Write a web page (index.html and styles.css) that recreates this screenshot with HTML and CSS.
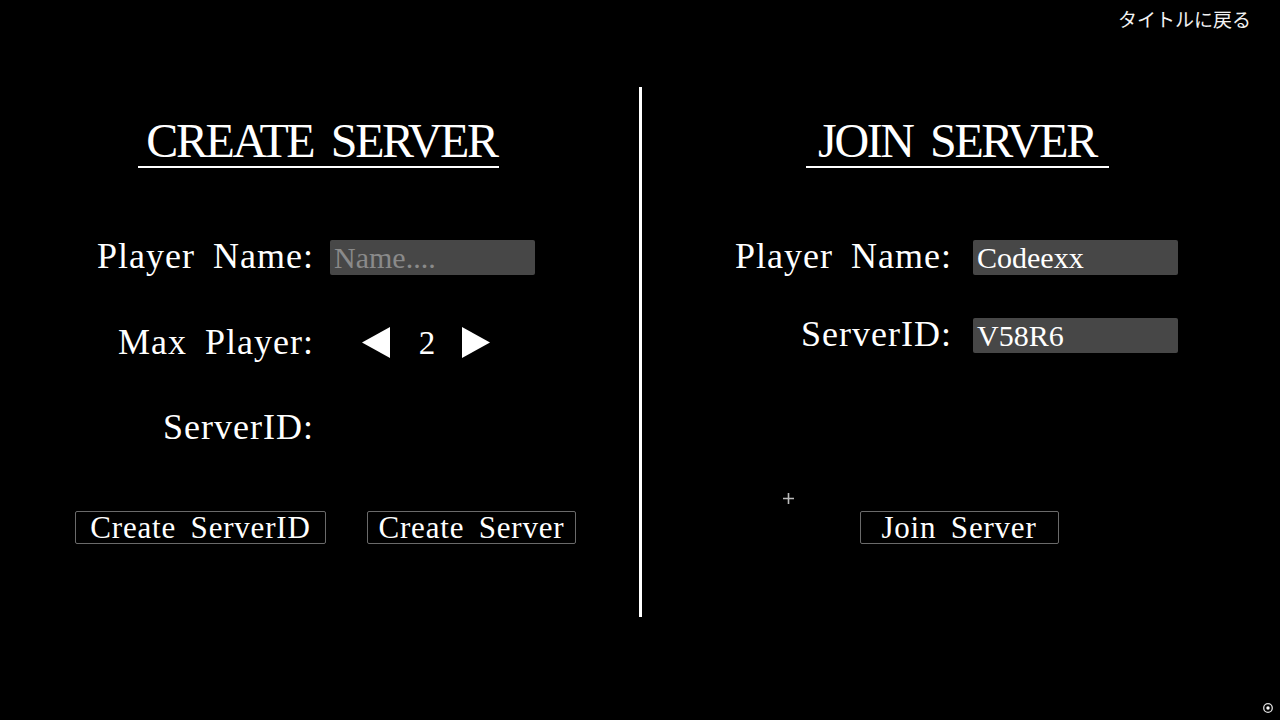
FILE: index.html
```html
<!DOCTYPE html>
<html lang="ja">
<head>
<meta charset="utf-8">
<title>Server Menu</title>
<link rel="stylesheet" href="styles.css">
</head>
<body>
<div class="screen">
  <a class="back-link">タイトルに戻る</a>

  <main class="menu">
    <section class="panel panel-create">
      <h1 class="panel-title">CREATE SERVER</h1>
      <div class="form form-create">
        <div class="row">
          <span class="label">Player Name:</span>
          <span class="field placeholder">Name....</span>
        </div>
        <div class="row">
          <span class="label">Max Player:</span>
          <div class="stepper">
            <svg class="arrow" viewBox="0 0 28 31" width="28" height="31"><polygon points="28,0 28,31 0,15.5" fill="#fff"/></svg>
            <span class="count">2</span>
            <svg class="arrow" viewBox="0 0 28 31" width="28" height="31"><polygon points="0,0 0,31 28,15.5" fill="#fff"/></svg>
          </div>
        </div>
        <div class="row">
          <span class="label">ServerID:</span>
          <span class="value"></span>
        </div>
      </div>
      <div class="buttons buttons-create">
        <button class="btn btn-wide">Create ServerID</button>
        <button class="btn btn-mid">Create Server</button>
      </div>
    </section>

    <div class="divider"></div>

    <section class="panel panel-join">
      <h1 class="panel-title title-join">JOIN SERVER</h1>
      <div class="form form-join">
        <div class="row">
          <span class="label">Player Name:</span>
          <span class="field">Codeexx</span>
        </div>
        <div class="row">
          <span class="label">ServerID:</span>
          <span class="field">V58R6</span>
        </div>
      </div>
      <div class="buttons buttons-join">
        <button class="btn btn-join">Join Server</button>
      </div>
    </section>
  </main>

  <span class="cursor">
    <svg width="13" height="13" viewBox="0 0 13 13"><path d="M6.5 1v11M1 6.5h11" stroke="#bbb" stroke-width="1.6"/></svg>
  </span>
  <span class="corner-icon">
    <svg width="12" height="12" viewBox="0 0 12 12"><circle cx="6" cy="6" r="4.3" fill="none" stroke="#ddd" stroke-width="1.3"/><circle cx="6" cy="6" r="1.7" fill="#fff"/></svg>
  </span>
</div>
</body>
</html>
```

FILE: styles.css
```css
* { box-sizing: border-box; }

html, body {
  margin: 0;
  padding: 0;
  background: #000;
}

body {
  width: 1280px;
  height: 720px;
  overflow: hidden;
  color: #fff;
  font-family: "Liberation Serif", "Times New Roman", serif;
}

.screen {
  position: relative;
  width: 1280px;
  height: 720px;
}

.back-link {
  position: absolute;
  top: 7px;
  right: 29px;
  font-family: "Noto Sans CJK JP", "Noto Sans", sans-serif;
  font-size: 19px;
  line-height: 24px;
  color: #f2f2f2;
}

.menu {
  display: flex;
  width: 1280px;
  height: 720px;
}

.panel {
  width: 639px;
  display: flex;
  flex-direction: column;
  align-items: center;
  padding-top: 117px;
}

.panel-join {
  width: 638px;
}

.divider {
  width: 3px;
  height: 530px;
  margin-top: 87px;
  background: #fff;
}

.panel-title {
  margin: 0 0 0 -2px;
  padding: 0 2px 1px 8px;
  font-size: 48px;
  line-height: 48px;
  font-weight: normal;
  letter-spacing: -2.4px;
  word-spacing: 8px;
  border-bottom: 2px solid #fff;
  white-space: nowrap;
}

.title-join {
  margin-left: -7px;
  padding: 0 13px 1px 12px;
}

.form {
  align-self: stretch;
  margin-top: 72px;
  height: 271px;
  display: grid;
  align-content: start;
}

.form-create {
  grid-template-columns: 314px 1fr;
  column-gap: 16px;
  row-gap: 51px;
}

.form-join {
  grid-template-columns: 310px 1fr;
  column-gap: 21px;
  row-gap: 43px;
}

.row {
  display: contents;
}

.label {
  justify-self: end;
  font-size: 36px;
  line-height: 32px;
  height: 34px;
  letter-spacing: 1px;
  word-spacing: 8px;
  white-space: nowrap;
}

.field {
  width: 205px;
  height: 35px;
  background: #474747;
  border-radius: 2px;
  font-size: 30px;
  line-height: 35px;
  padding-left: 4px;
  color: #fff;
  white-space: nowrap;
}

.field.placeholder {
  color: #8a8a8a;
}

.value {
  height: 34px;
}

.stepper {
  display: flex;
  align-items: center;
  height: 34px;
  padding-left: 32px;
}

.arrow {
  display: block;
  margin-top: -2px;
}

.count {
  width: 72px;
  text-align: center;
  font-size: 33px;
  line-height: 34px;
  padding-left: 2px;
}

.buttons {
  align-self: stretch;
  display: flex;
}

.buttons-create {
  padding-left: 75px;
  gap: 41px;
}

.buttons-join {
  justify-content: center;
  padding-right: 4px;
}

.btn {
  height: 33px;
  margin: 0;
  padding: 0;
  background: #000;
  color: #fff;
  border: 1px solid #6a6a6a;
  border-radius: 2px;
  font-family: "Liberation Serif", "Times New Roman", serif;
  font-size: 31px;
  line-height: 30px;
  letter-spacing: 0.8px;
  word-spacing: 6px;
  text-align: center;
  white-space: nowrap;
}

.btn-wide { width: 251px; }
.btn-mid { width: 209px; }
.btn-join { width: 199px; }

.cursor {
  position: absolute;
  left: 782px;
  top: 492px;
  line-height: 0;
}

.corner-icon {
  position: absolute;
  left: 1262px;
  top: 702px;
  line-height: 0;
}
```
